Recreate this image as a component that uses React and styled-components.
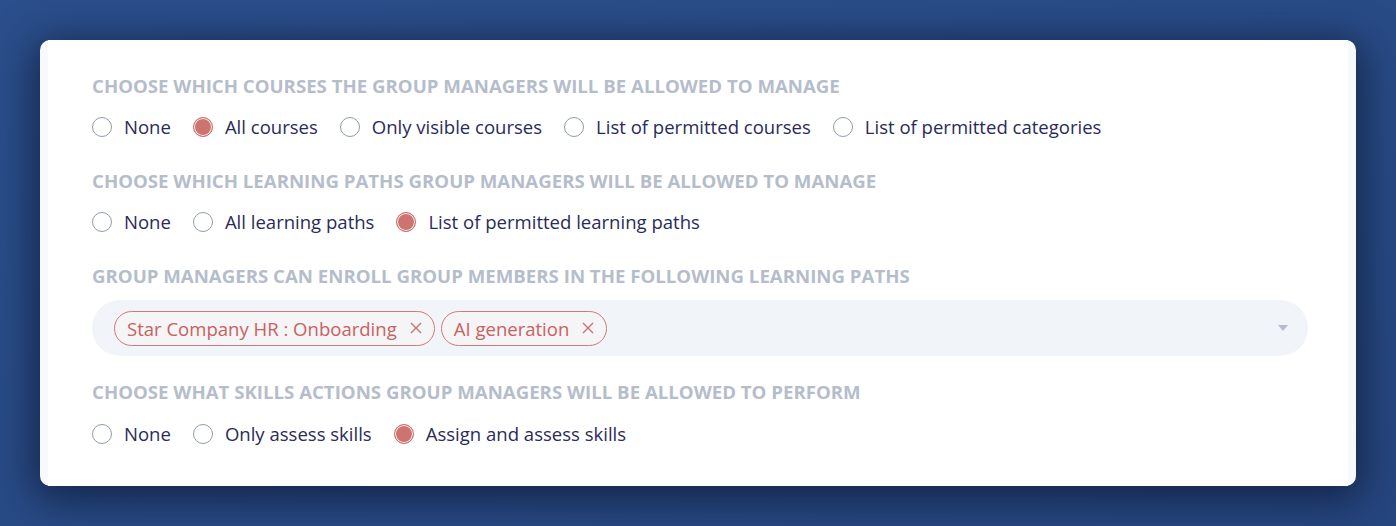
import React, { useState } from "react"
import styled, { createGlobalStyle } from "styled-components"

const GlobalStyle = createGlobalStyle`
  html, body {
    margin: 0;
    padding: 0;
  }
  body {
    background: #294b87;
    font-family: "Open Sans", Lato, sans-serif;
  }
`

const Page = styled.div`
  width: 1396px;
  height: 526px;
  box-sizing: border-box;
  padding: 40px 40px 0 40px;
  background: linear-gradient(160deg, #2b4f8c 0%, #284a85 60%, #26467f 100%);
  overflow: hidden;
`

const Card = styled.div`
  height: 446px;
  box-sizing: border-box;
  background: #f7f9fc;
  border-radius: 10px;
  padding: 0 8px;
  box-shadow: 0 8px 40px 6px rgba(14, 25, 52, 0.75);
`

const Inner = styled.div`
  height: 100%;
  box-sizing: border-box;
  background: #ffffff;
  padding: 35px 40px 0 44px;
  display: flex;
  flex-direction: column;
`

const Section = styled.div`
  display: flex;
  flex-direction: column;
  gap: ${({ tight }) => (tight ? "20px" : "19px")};
  margin-bottom: 32px;
`

const Heading = styled.div`
  font-size: 18.65px;
  font-weight: 700;
  line-height: 22px;
  color: #b5bdcb;
  text-transform: uppercase;
`

const RadioRow = styled.div`
  display: flex;
  align-items: center;
  gap: 22px;
`

const RadioLabel = styled.label`
  display: flex;
  align-items: center;
  gap: 12px;
  cursor: pointer;
  font-size: 18.55px;
  line-height: 22px;
  color: #2a2b5a;
`

const RadioCircle = styled.span`
  width: 20px;
  height: 20px;
  box-sizing: border-box;
  border-radius: 50%;
  border: 1px solid ${({ checked }) => (checked ? "#cd6f6c" : "#8f9bb2")};
  background: ${({ checked }) => (checked ? "#cd7370" : "#ffffff")};
  box-shadow: ${({ checked }) => (checked ? "inset 0 0 0 1px #ffffff" : "none")};
  flex-shrink: 0;
`

const Select = styled.div`
  height: 56px;
  box-sizing: border-box;
  border-radius: 28px;
  background: #f1f4f9;
  padding: 0 22px;
  display: flex;
  align-items: center;
  gap: 6px;
  margin-top: -19px;
  margin-bottom: 25px;
`

const Chip = styled.span`
  display: inline-flex;
  align-items: center;
  gap: 13px;
  height: 35px;
  box-sizing: border-box;
  padding: 0 12px;
  border: 1px solid #d27a77;
  border-radius: 18px;
  background: #f5f4f6;
  color: #c7625f;
  font-size: 18.55px;
`

const ChipRemove = styled.span`
  display: inline-flex;
  color: #c96e6b;
  cursor: pointer;
`

const Arrow = styled.span`
  margin-left: auto;
  margin-right: -2px;
  width: 0;
  height: 0;
  border-left: 5.5px solid transparent;
  border-right: 5.5px solid transparent;
  border-top: 6px solid #b5bcc9;
`

const sections = [
  {
    title: "Choose which courses the group managers will be allowed to manage",
    options: [
      "None",
      "All courses",
      "Only visible courses",
      "List of permitted courses",
      "List of permitted categories",
    ],
    value: 1,
  },
  {
    title: "Choose which learning paths group managers will be allowed to manage",
    options: ["None", "All learning paths", "List of permitted learning paths"],
    value: 2,
  },
]

const RadioGroup = ({ options, initial }) => {
  const [value, setValue] = useState(initial)
  return (
    <RadioRow>
      {options.map((opt, i) => (
        <RadioLabel key={opt} onClick={() => setValue(i)}>
          <RadioCircle checked={value === i} />
          {opt}
        </RadioLabel>
      ))}
    </RadioRow>
  )
}

const CloseIcon = () => (
  <svg width="12" height="12" viewBox="0 0 12 12" fill="none">
    <path d="M1 1L11 11M11 1L1 11" stroke="currentColor" strokeWidth="1.3" />
  </svg>
)

const App = () => {
  const [chips, setChips] = useState(["Star Company HR : Onboarding", "AI generation"])

  return (
    <>
      <GlobalStyle />
      <Page>
        <Card>
          <Inner>
            {sections.map((s) => (
              <Section key={s.title}>
                <Heading>{s.title}</Heading>
                <RadioGroup options={s.options} initial={s.value} />
              </Section>
            ))}
            <Section>
              <Heading>Group managers can enroll group members in the following learning paths</Heading>
            </Section>
            <Select>
              {chips.map((c) => (
                <Chip key={c}>
                  {c}
                  <ChipRemove onClick={() => setChips(chips.filter((x) => x !== c))}>
                    <CloseIcon />
                  </ChipRemove>
                </Chip>
              ))}
              <Arrow />
            </Select>
            <Section tight>
              <Heading>Choose what skills actions group managers will be allowed to perform</Heading>
              <RadioGroup options={["None", "Only assess skills", "Assign and assess skills"]} initial={2} />
            </Section>
          </Inner>
        </Card>
      </Page>
    </>
  )
}

export default App
